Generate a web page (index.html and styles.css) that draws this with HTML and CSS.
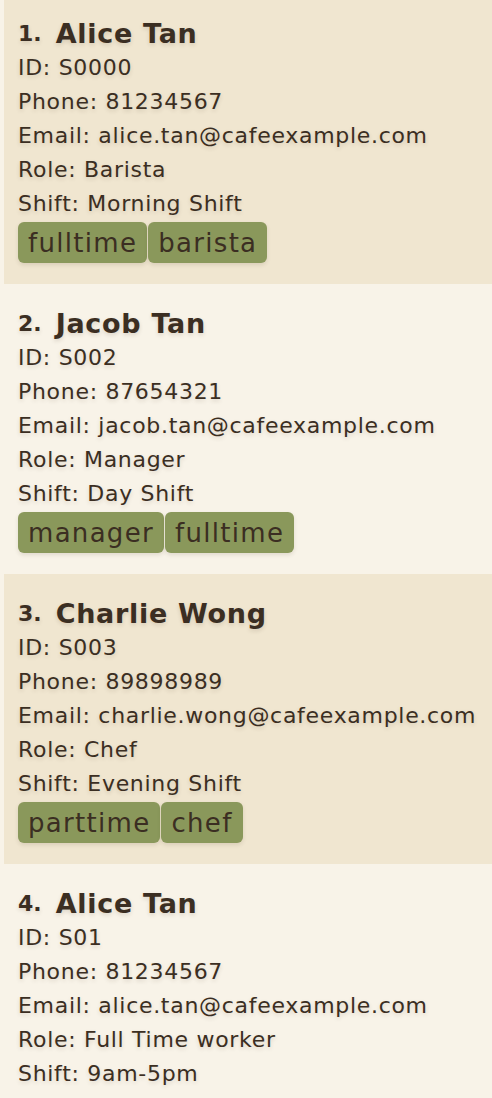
FILE: index.html
```html
<!DOCTYPE html>
<html>
<head>
<meta charset="utf-8">
<link rel="stylesheet" href="styles.css">
</head>
<body>
<div class="list">
  <div class="card odd">
    <div class="head"><span class="idx">1.</span><span class="name">Alice Tan</span></div>
    <div class="line">ID: S0000</div>
    <div class="line">Phone: 81234567</div>
    <div class="line">Email: alice.tan@cafeexample.com</div>
    <div class="line">Role: Barista</div>
    <div class="line">Shift: Morning Shift</div>
    <div class="tags"><span class="tag">fulltime</span><span class="tag">barista</span></div>
  </div>
  <div class="card even">
    <div class="head"><span class="idx">2.</span><span class="name">Jacob Tan</span></div>
    <div class="line">ID: S002</div>
    <div class="line">Phone: 87654321</div>
    <div class="line">Email: jacob.tan@cafeexample.com</div>
    <div class="line">Role: Manager</div>
    <div class="line">Shift: Day Shift</div>
    <div class="tags"><span class="tag">manager</span><span class="tag">fulltime</span></div>
  </div>
  <div class="card odd">
    <div class="head"><span class="idx">3.</span><span class="name">Charlie Wong</span></div>
    <div class="line">ID: S003</div>
    <div class="line">Phone: 89898989</div>
    <div class="line">Email: charlie.wong@cafeexample.com</div>
    <div class="line">Role: Chef</div>
    <div class="line">Shift: Evening Shift</div>
    <div class="tags"><span class="tag">parttime</span><span class="tag">chef</span></div>
  </div>
  <div class="card even">
    <div class="head"><span class="idx">4.</span><span class="name">Alice Tan</span></div>
    <div class="line">ID: S01</div>
    <div class="line">Phone: 81234567</div>
    <div class="line">Email: alice.tan@cafeexample.com</div>
    <div class="line">Role: Full Time worker</div>
    <div class="line">Shift: 9am-5pm</div>
  </div>
</div>
</body>
</html>
```
FILE: styles.css
```css
html, body {
  margin: 0;
  padding: 0;
  background: #f8f3e8;
  overflow: hidden;
}
body {
  width: 492px;
  height: 1098px;
  font-family: "DejaVu Sans", "Liberation Sans", sans-serif;
  color: #3b2e22;
}
.list {
  margin-top: -6px;
  padding-left: 4px;
  display: flex;
  flex-direction: column;
}
.card {
  height: 290px;
  box-sizing: border-box;
  padding: 21px 0 0 14px;
  white-space: nowrap;
  text-shadow: 0 2px 4px rgba(60, 40, 20, 0.15);
}
.card.odd { background: #f0e6d0; }
.card.even { background: #f8f3e8; }
.head {
  height: 36px;
  display: flex;
  align-items: center;
}
.idx {
  font-size: 22px;
  font-weight: bold;
  margin-right: 14px;
}
.name {
  font-size: 27px;
  font-weight: bold;
  letter-spacing: 0.7px;
}
.line {
  height: 34px;
  line-height: 34px;
  font-size: 22px;
  letter-spacing: 0.7px;
}
.tags {
  margin-top: 1px;
  display: flex;
  gap: 1px;
}
.tag {
  background: #8a985b;
  border-radius: 6px;
  height: 41px;
  line-height: 42px;
  padding: 0 10px;
  font-size: 26px;
  letter-spacing: 1.3px;
  text-shadow: none;
  box-shadow: 0 2px 4px rgba(60, 40, 20, 0.12);
}
```
